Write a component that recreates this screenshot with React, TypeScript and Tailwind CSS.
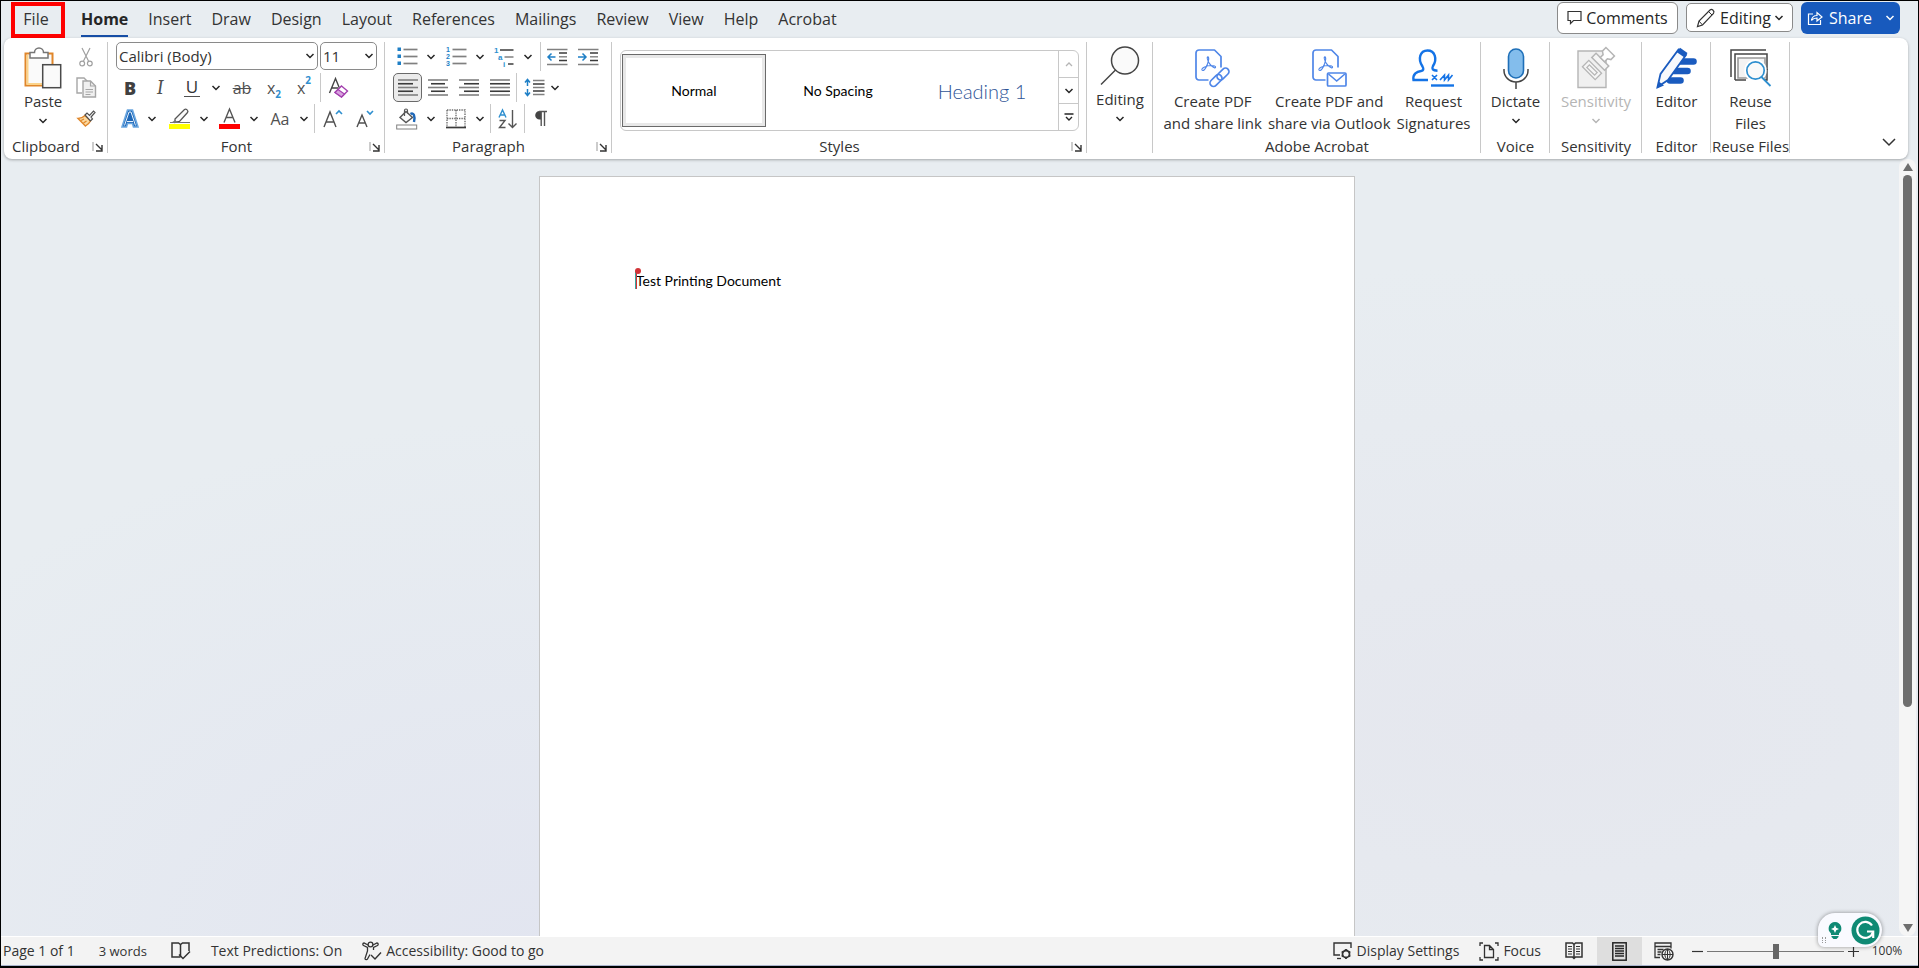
import type { ReactNode } from "react";
import clsx from "clsx";

const tabs = ["Insert", "Draw", "Design", "Layout", "References", "Mailings", "Review", "View", "Help", "Acrobat"];

/* ---------- small helpers ---------- */

function Svg({ w, h, children }: { w: number; h: number; children: ReactNode }) {
  return (
    <svg width={w} height={h} viewBox={`0 0 ${w} ${h}`} fill="none" className="shrink-0 overflow-visible" aria-hidden="true">
      {children}
    </svg>
  );
}

function Chevron({ color = "#262626" }: { color?: string }) {
  return (
    <Svg w={8} h={6}>
      <path d="M.5 1L4 4.500 7.500 1" stroke={color} strokeWidth="1.500" />
    </Svg>
  );
}

function Tool({ label, className, children }: { label: string; className?: string; children: ReactNode }) {
  return (
    <button type="button" aria-label={label} className={clsx("flex h-[29px] items-center justify-center", className ?? "w-8")}>
      {children}
    </button>
  );
}

function More({ label, className }: { label: string; className?: string }) {
  return (
    <button type="button" aria-label={label} className={clsx("flex h-[29px] w-4 items-center justify-center", className)}>
      <Chevron />
    </button>
  );
}

function Rule({ className }: { className?: string }) {
  return <span className={clsx("h-[29px] w-px bg-[#c8c8c8]", className)} />;
}

function Group({
  label,
  launcher,
  className,
  children,
}: {
  label: string;
  launcher?: boolean;
  className?: string;
  children: ReactNode;
}) {
  return (
    <section aria-label={label || "Editing"} className={clsx("relative flex shrink-0 flex-col", className)}>
      <div className="min-h-0 flex-1 pt-1">{children}</div>
      <div className={clsx("h-[25px] text-center leading-6", launcher && "pr-5")}>{label}</div>
      {launcher && (
        <button type="button" aria-label={`${label} settings`} className="absolute right-1 bottom-1.5">
          <Svg w={12} h={12}>
            <path d="M1 1v9" stroke="#999" />
            <path d="M4 3l6 6M10 4v6H4" stroke="#333" strokeWidth="1.4" />
          </Svg>
        </button>
      )}
      <span className="absolute top-1 right-0 bottom-1.5 w-px bg-[#c8c8c8]" />
    </section>
  );
}

function BigButton({
  icon,
  lines,
  more,
  disabled,
}: {
  icon: ReactNode;
  lines: string[];
  more?: boolean;
  disabled?: boolean;
}) {
  return (
    <button type="button" disabled={disabled} className={clsx("flex flex-col items-center", disabled && "text-[#b5b5b5]")}>
      <span className="flex h-11 items-center justify-center">{icon}</span>
      {lines.map((line) => (
        <span key={line} className="h-[22px] leading-[22px] whitespace-nowrap">
          {line}
        </span>
      ))}
      {more && (
        <span className="flex h-[18px] items-center">
          <Chevron color={disabled ? "#b5b5b5" : "#262626"} />
        </span>
      )}
    </button>
  );
}

/* Five ruled lines used by the alignment icons */
function Lines({ long, short }: { long: [number, number]; short: [number, number] }) {
  return (
    <Svg w={20} h={17}>
      {[long, short, long, short, long].map(([x1, x2], i) => (
        <path key={i} d={`M${x1} ${1 + i * 3.75}H${x2}`} stroke={i % 2 ? "#3b3b3b" : "#808080"} strokeWidth="1.600" />
      ))}
    </Svg>
  );
}

/* ---------- ribbon icons ---------- */

const PasteIcon = () => (
  <Svg w={38} h={42}>
    <rect x="1.5" y="6.5" width="27" height="32" fill="#fafafa" stroke="#e0862a" strokeWidth="2" />
    <path d="M3.5 8v29h24" stroke="#fbd38a" strokeWidth="2" />
    <path d="M6 5.5h4.5a4.5 4.5 0 0 1 9 0H24V11H6z" fill="#fff" stroke="#767676" strokeWidth="1.5" />
    <rect x="18.7" y="17.7" width="18" height="23" fill="#fafafa" stroke="#4a4a4a" strokeWidth="1.5" />
  </Svg>
);

const CutIcon = () => (
  <Svg w={14} h={20}>
    <path d="M3 1l6.5 13M11 1L4.5 14" stroke="#a0a0a0" strokeWidth="1.2" />
    <circle cx="3.2" cy="16.5" r="2.4" stroke="#a0a0a0" strokeWidth="1.2" />
    <circle cx="10.8" cy="16.5" r="2.4" stroke="#a0a0a0" strokeWidth="1.2" />
  </Svg>
);

const CopyIcon = () => (
  <Svg w={21} h={21}>
    <path d="M6 16H1V1h7l4 4" stroke="#a6a6a6" strokeWidth="1.4" />
    <path d="M7 4h7.5l5 5v11H7z" fill="#f0f0f0" stroke="#a6a6a6" strokeWidth="1.4" />
    <path d="M14.5 4v5h5M9.5 12.5h7.5M9.5 15h7.5M9.5 17.5h5" stroke="#a6a6a6" strokeWidth="1.2" />
  </Svg>
);

const BrushIcon = () => (
  <Svg w={19} h={17}>
    <path d="M1 8.5c3 0 5-1 7-3l5.5 5.5c-1 2-2.5 3.5-5 5z" fill="#fbd9a0" stroke="#e0862a" strokeWidth="1.4" />
    <path d="M4 10.5l3-1.5M6.5 13l3-2" stroke="#e0862a" strokeWidth="1.2" />
    <path d="M8 5l2-2 2.5 2.5L16.500 1 18 2.500l-4 4.500 1.500 2-2 2z" fill="#fafafa" stroke="#505050" strokeWidth="1.2" />
  </Svg>
);

const ClearFormatIcon = () => (
  <Svg w={22} h={22}>
    <path d="M1.500 16L7.500 1.500l4.500 11M3.500 11H10" stroke="#444" strokeWidth="1.4" />
    <path d="M13.500 9l6 5-6 6-6.500-4.500z" fill="#fff" stroke="#a33fae" strokeWidth="1.4" />
    <path d="M7 15.500l3-3 6.500 4.500-3 3z" fill="#d9a3df" stroke="#a33fae" strokeWidth="1.2" />
  </Svg>
);

const TextEffectsIcon = () => (
  <Svg w={18} h={19}>
    <path d="M6.500 1h5L17 18h-4.500l-1-3.500h-5L5.500 18H1z" fill="#1f68b8" stroke="#6ba7e0" strokeWidth="1.600" />
    <path d="M3.500 16.500L8 3h2l4.500 13.500M6 12.500h6" stroke="#e6f1fb" strokeWidth="1" />
  </Svg>
);

const HighlighterIcon = () => (
  <Svg w={22} h={22}>
    <path d="M6 11L15.5 1.5c1.500-1 4.500 1 3 3L10.500 13.500 6 14.500z" fill="#fafafa" stroke="#555" strokeWidth="1.3" />
    <path d="M2 15l4-3 3 2.500z" fill="#777" />
    <path d="M1 14.500h20" stroke="#777" strokeWidth="1" />
    <rect x="0" y="16" width="21" height="5" fill="#ffff00" />
  </Svg>
);

const FontColorIcon = () => (
  <Svg w={22} h={22}>
    <path d="M5 14.500L10.500 1l5.500 13.500M7 9.500h7" stroke="#555" strokeWidth="1.4" />
    <rect x="0" y="16" width="21" height="5" fill="#ff0000" />
  </Svg>
);

const GrowIcon = ({ down }: { down?: boolean }) => (
  <Svg w={20} h={20}>
    {down ? (
      <>
        <path d="M2 18L7 6l5 12M4 14h6" stroke="#505050" strokeWidth="1.4" />
        <path d="M12 2l3 3 3-3" stroke="#2e8fcf" strokeWidth="1.6" />
      </>
    ) : (
      <>
        <path d="M1 18L7 3l6 15M3 13h8" stroke="#505050" strokeWidth="1.4" />
        <path d="M13 5l3-3 3 3" stroke="#2e8fcf" strokeWidth="1.6" />
      </>
    )}
  </Svg>
);

const BulletsIcon = () => (
  <Svg w={21} h={19}>
    {[2, 9, 16].map((y) => (
      <g key={y}>
        <rect x="0.5" y={y - 1.5} width="3.5" height="3.5" fill="#1e7fc6" />
        <path d={`M6.500 ${y + 0.5}H20.500`} stroke="#808080" strokeWidth="1.7" />
      </g>
    ))}
  </Svg>
);

const NumberingIcon = () => (
  <Svg w={21} h={19}>
    {[2.5, 9.5, 16.5].map((y, i) => (
      <g key={y}>
        <text x="0" y={y + 2.5} fontSize="7" fontWeight="700" fill="#1e7fc6" fontFamily="Liberation Sans">
          {i + 1}
        </text>
        <path d={`M6.500 ${y}H20.500`} stroke="#808080" strokeWidth="1.7" />
      </g>
    ))}
  </Svg>
);

const MultilevelIcon = () => (
  <Svg w={20} h={20}>
    <g fontSize="8" fontWeight="700" fill="#2e8fcf" fontFamily="Liberation Sans">
      <text x="0" y="6">1</text>
      <text x="4" y="13">a</text>
      <text x="9" y="20">i</text>
    </g>
    <path d="M6 3h13.5" stroke="#3b3b3b" strokeWidth="1.500" />
    <path d="M10.500 10h9" stroke="#808080" strokeWidth="1.500" />
    <path d="M14 17h5.500" stroke="#3b3b3b" strokeWidth="1.500" />
  </Svg>
);

const IndentIcon = ({ right }: { right?: boolean }) => (
  <Svg w={21} h={18}>
    <path d="M0 1.500h20.500M0 16.500h20.500" stroke="#808080" strokeWidth="1.7" />
    <path d="M12 5h8M12 12.500h8" stroke="#3b3b3b" strokeWidth="1.4" />
    <path d="M12 8.800h8" stroke="#808080" strokeWidth="1.4" />
    <path
      d={right ? "M0 9h7.500M4.500 5.500L8 9l-3.500 3.500" : "M1 9h7.500M4.500 5.500L1 9l3.500 3.500"}
      stroke="#1e7fc6"
      strokeWidth="1.5"
    />
  </Svg>
);

const SpacingIcon = () => (
  <Svg w={21} h={19}>
    <path d="M3.500 8V1.500M1 4.500L3.500 1.500 6 4.500M3.500 11v6.500M1 14.500l2.500 3 2.500-3" stroke="#1e7fc6" strokeWidth="1.5" />
    <path d="M9 2.500h11.500M9 9.500h11.500M9 16.500h11.500" stroke="#808080" strokeWidth="1.5" />
    <path d="M9 6h11.500M9 13h11.500" stroke="#3b3b3b" strokeWidth="1.3" />
  </Svg>
);

const ShadingIcon = () => (
  <Svg w={22} h={22}>
    <path d="M10 3.500l6.500 6L10 14.500 4 9.500z" fill="#fafafa" stroke="#555" strokeWidth="1.4" />
    <path d="M8.500 8V2.500c0-2 3-2 3 0v3" stroke="#555" strokeWidth="1.2" />
    <path d="M14.500 6c3-2 5 2 3.500 8" stroke="#1f68b8" strokeWidth="2.4" />
    <rect x="0.7" y="17" width="20" height="4" fill="#fff" stroke="#808080" />
  </Svg>
);

const BordersIcon = () => (
  <Svg w={20} h={20}>
    <path d="M1 1h18v17M1 1v17M10 1v17M1 9.500h18" stroke="#707070" strokeWidth="1.4" strokeDasharray="1.4 1" />
    <path d="M0 18.500h20" stroke="#3b3b3b" strokeWidth="1.7" />
  </Svg>
);

const SortIcon = () => (
  <Svg w={19} h={20}>
    <path d="M1 8.500L4.500 1 8 8.500M2.200 6h4.600" stroke="#2e8fcf" strokeWidth="1.4" />
    <path d="M1.500 11.500h5.500l-5.500 7h6" stroke="#555" strokeWidth="1.4" />
    <path d="M14.500 1v17M10.500 14.500l4 4 4-4" stroke="#555" strokeWidth="1.4" />
  </Svg>
);

const PilcrowIcon = () => (
  <Svg w={14} h={17}>
    <path d="M7 1H5.500a4.300 4.300 0 0 0 0 8.600H7z" fill="#444" />
    <path d="M5 1.500h8M7.200 1v15M10.500 1v15" stroke="#555" strokeWidth="1.4" />
  </Svg>
);

const FindIcon = () => (
  <Svg w={40} h={40}>
    <circle cx="25" cy="14.500" r="13.500" fill="#fafafa" stroke="#444" strokeWidth="1.5" />
    <path d="M15.500 24L1 38.500" stroke="#444" strokeWidth="1.5" />
  </Svg>
);

const PdfBase = () => (
  <g stroke="#4f86e8" strokeWidth="1.7">
    <path d="M13.500 31H4a3 3 0 0 1-3-3V4a3 3 0 0 1 3-3h15.500L26 7.500v11" strokeLinejoin="round" />
    <path
      d="M12.500 8c2.500-.5.5 6-1 9.500-1.500 3-3.500 5-4.500 3.500-1-2 5-4.500 9-4.500 3 0 5 .8 4.500 2-.7 1.200-4-1-6-3.800C13 12 11.500 9 12.500 8z"
      strokeWidth="1.2"
    />
  </g>
);

const PdfLinkIcon = () => (
  <Svg w={35} h={39}>
    <PdfBase />
    <g stroke="#4f86e8" strokeWidth="1.7">
      <rect x="-3.5" y="-7" width="7" height="14" rx="3.5" transform="translate(21 31.500) rotate(45)" />
      <rect x="-3.5" y="-7" width="7" height="14" rx="3.5" transform="translate(28 25) rotate(45)" />
    </g>
  </Svg>
);

const PdfMailIcon = () => (
  <Svg w={35} h={39}>
    <PdfBase />
    <rect x="15.5" y="24" width="18.5" height="13" rx="1" fill="#fff" stroke="#4f86e8" strokeWidth="1.7" />
    <path d="M16.500 25l8.200 7 8.200-7" stroke="#4f86e8" strokeWidth="1.6" />
  </Svg>
);

const SignaturesIcon = () => (
  <Svg w={43} h={39}>
    <path
      d="M16 31H1.500c-1-6 3.500-8.500 7.500-9 2.500-.5 3-2 1.500-4.500C5.500 10 8 1.500 15.500 1.500S25.500 10 21 17c-1.500 3-.5 4.500 4.500 4.700"
      stroke="#1473e6"
      strokeWidth="2.4"
    />
    <path d="M20 26l5 5M25 26l-5 5M28 31l4.500-5v5l4-5v5l4-5" stroke="#1473e6" strokeWidth="1.6" />
    <path d="M19 36.500h23" stroke="#1473e6" strokeWidth="2.4" />
  </Svg>
);

const MicIcon = () => (
  <Svg w={26} h={41}>
    <path d="M1 21v1.500a12 11.500 0 0 0 24 0V21M13 34v7" stroke="#444" strokeWidth="1.5" />
    <rect x="5.5" y="1" width="15" height="29" rx="7.5" fill="#83bdec" stroke="#1e6fb8" strokeWidth="1.6" />
  </Svg>
);

const SensitivityIcon = () => (
  <Svg w={38} h={41}>
    <path d="M1 3h28v36.500H1z" fill="#f0f0f0" stroke="#b5b5b5" strokeWidth="1.4" />
    <g transform="translate(15 22) rotate(45)">
      <rect x="-9" y="-4.5" width="18" height="9" fill="#f5f5f5" stroke="#b5b5b5" strokeWidth="1.3" />
      <rect x="-5.5" y="-1.8" width="11" height="3.6" stroke="#b5b5b5" strokeWidth="1.2" />
    </g>
    <g transform="translate(24 13) rotate(45)">
      <path d="M-9-2H9v6H-9z" fill="#f5f5f5" stroke="#b5b5b5" strokeWidth="1.5" />
      <path d="M-3-2v-4l-3-2v-5H6v5l-3 2v4z" fill="#fff" stroke="#b5b5b5" strokeWidth="1.5" />
    </g>
  </Svg>
);

const EditorIcon = () => (
  <Svg w={42} h={42}>
    <path d="M22 14.500h15.500M18 24h13.500M14 33.500h10.500" stroke="#1a5bbf" strokeWidth="6.6" strokeLinecap="round" />
    <path d="M1.500 40l3-13L22.500 2.500l7.500 5.500-18 25z" fill="#f7f9fc" stroke="#1a5bbf" strokeWidth="1.8" />
    <path d="M20.500 5L24 .8 31.500 6l-3 4.500z" fill="#1a5bbf" />
    <path d="M1 41.500l1.800-7L8 38.500z" fill="#1a5bbf" />
  </Svg>
);

const ReuseIcon = () => (
  <Svg w={40} h={39}>
    <path d="M1 28V1h35M5 31V5h32v16" stroke="#444" strokeWidth="1.5" />
    <path d="M8 9h27v20H8z" fill="#f3f3f3" stroke="#999" strokeWidth="1.6" />
    <path d="M37 20v11h-3M5 31h11" stroke="#444" strokeWidth="1.5" />
    <circle cx="25.5" cy="21.5" r="8.7" fill="#fafafa" stroke="#fff" strokeWidth="5" />
    <circle cx="25.5" cy="21.5" r="8.7" fill="#fafafa" stroke="#2e8fcf" strokeWidth="1.7" />
    <path d="M31.500 28l9 9" stroke="#2e8fcf" strokeWidth="1.8" />
  </Svg>
);

/* ---------- title row ---------- */

function TabRow() {
  return (
    <header className="flex h-[37px] items-center text-base text-[#333]">
      <nav className="flex items-center gap-5">
        <a
          href="#file"
          className="-mr-1 ml-2.5 flex h-9 w-[54px] items-center justify-center border-4 border-[#ff0000] pr-1 pb-0.5"
        >
          File
        </a>
        <a href="#home" className="relative pb-0.5 font-bold text-[#262626]">
          Home
          <span className="absolute right-0 -bottom-1 left-0 h-0.5 bg-[#174ea6]" />
        </a>
        {tabs.map((tab) => (
          <a key={tab} href={`#${tab.toLowerCase()}`} className="pb-0.5">
            {tab}
          </a>
        ))}
      </nav>
      <div className="mr-[18px] mb-1 ml-auto flex items-center gap-2 text-[#262626]">
        <button type="button" className="flex h-8 w-[121px] items-center justify-center gap-1 rounded-md border border-[#8a8a8a] bg-white">
          <Svg w={15} h={15}>
            <path d="M1 1.500h13v9H6.500L3.500 13.500v-3H1z" stroke="#333" strokeWidth="1.2" />
          </Svg>
          Comments
        </button>
        <button type="button" className="flex h-[29px] w-[107px] items-center justify-center gap-1 rounded-[5px] border border-[#8a8a8a] bg-white">
          <Svg w={20} h={20}>
            <path d="M1.500 18.500L3 13 14 2c2-1.500 5 1 3.500 3.500L6.500 17z" stroke="#333" strokeWidth="1.2" />
            <path d="M12.500 3.500l3.500 3.500M3 13l3.500 4" stroke="#333" />
          </Svg>
          Editing
          <Chevron />
        </button>
        <button type="button" className="flex h-8 w-[99px] items-center justify-center gap-1.5 rounded-md bg-[#185abd] text-white">
          <Svg w={16} h={16}>
            <path d="M6 4H1.500v10.500h12V10" stroke="#fff" strokeWidth="1.2" />
            <path d="M4.500 10.500C5 7 7 5.500 10 5.500V2.500l5 4.500-5 4V8c-2.500 0-4 .5-5.500 2.500z" stroke="#fff" strokeWidth="1.2" />
          </Svg>
          Share
          <span className="ml-2">
            <Chevron color="#fff" />
          </span>
        </button>
      </div>
    </header>
  );
}

/* ---------- ribbon ---------- */

function SelectBox({ label, value, className }: { label: string; value: string; className: string }) {
  return (
    <label className={clsx("relative flex h-7 items-center", className)}>
      <select aria-label={label} className="h-full w-full appearance-none rounded-[5px] border border-[#8a8a8a] bg-white pl-0.5">
        <option>{value}</option>
      </select>
      <span className="pointer-events-none absolute right-1">
        <Chevron />
      </span>
    </label>
  );
}

function Ribbon() {
  return (
    <div className="relative z-10 mr-2.5 ml-[3px] flex h-[121px] rounded-lg bg-white text-[15px] text-[#333] shadow-[0_1px_3px_rgba(0,0,0,0.3)]">
      <Group label="Clipboard" launcher className="w-[104px]">
        <div className="flex pt-1 pl-5">
          <BigButton icon={<PasteIcon />} lines={["Paste"]} more />
          <div className="-mt-1 ml-2 flex flex-col gap-0.5">
            <Tool label="Cut"><CutIcon /></Tool>
            <Tool label="Copy"><CopyIcon /></Tool>
            <Tool label="Format Painter"><BrushIcon /></Tool>
          </div>
        </div>
      </Group>

      <Group label="Font" launcher className="w-[277px]">
        <div className="flex flex-col gap-0.5 pl-2">
          <div className="flex h-[29px] gap-0.5">
            <SelectBox label="Font" value="Calibri (Body)" className="w-[202px]" />
            <SelectBox label="Font Size" value="11" className="w-[57px]" />
          </div>
          <div className="flex">
            <Tool label="Bold" className="w-7 text-lg font-extrabold text-[#404040]">B</Tool>
            <Tool label="Italic" className="w-8 font-serif text-xl text-[#505050] italic">I</Tool>
            <Tool label="Underline" className="w-8">
              <span className="border-b border-[#505050] px-0.5 text-[17px] leading-[18px]">U</span>
            </Tool>
            <More label="Underline styles" />
            <Tool label="Strikethrough" className="w-9 text-base text-[#505050] line-through">ab</Tool>
            <Tool label="Subscript" className="w-7">
              <span className="text-base text-[#505050]">x</span>
              <span className="self-end text-[10px] font-bold text-[#2e8fcf]">2</span>
            </Tool>
            <Tool label="Superscript">
              <span className="text-base text-[#505050]">x</span>
              <span className="self-start text-[10px] font-bold text-[#2e8fcf]">2</span>
            </Tool>
            <Rule />
            <Tool label="Clear Formatting" className="w-9"><ClearFormatIcon /></Tool>
          </div>
          <div className="flex">
            <Tool label="Text Effects" className="w-7"><TextEffectsIcon /></Tool>
            <More label="More text effects" />
            <Tool label="Highlight" className="ml-1 w-8"><HighlighterIcon /></Tool>
            <More label="Highlight colors" />
            <Tool label="Font Color" className="ml-0.5 w-8"><FontColorIcon /></Tool>
            <More label="Font colors" />
            <Tool label="Change Case" className="ml-0.5 w-8 text-base text-[#505050]">Aa</Tool>
            <More label="More cases" />
            <Rule className="ml-0.5" />
            <Tool label="Grow Font" className="w-9"><GrowIcon /></Tool>
            <Tool label="Shrink Font" className="w-7"><GrowIcon down /></Tool>
          </div>
        </div>
      </Group>

      <Group label="Paragraph" launcher className="w-[227px]">
        <div className="flex flex-col gap-0.5 pl-1.5">
          <div className="flex">
            <Tool label="Bullets"><BulletsIcon /></Tool>
            <More label="Bullet styles" />
            <Tool label="Numbering" className="ml-px w-8"><NumberingIcon /></Tool>
            <More label="Number styles" />
            <Tool label="Multilevel List"><MultilevelIcon /></Tool>
            <More label="List styles" />
            <Rule className="ml-1" />
            <Tool label="Decrease Indent"><IndentIcon /></Tool>
            <Tool label="Increase Indent" className="w-[30px]"><IndentIcon right /></Tool>
          </div>
          <div className="flex">
            <Tool label="Align Left" className="ml-0.5 w-[29px] rounded-[5px] border border-[#6a6a6a] bg-[#ebebeb]">
              <Lines long={[0, 20]} short={[0, 15]} />
            </Tool>
            <Tool label="Center"><Lines long={[0, 20]} short={[3, 17]} /></Tool>
            <Tool label="Align Right" className="w-[30px]"><Lines long={[0, 20]} short={[5, 20]} /></Tool>
            <Tool label="Justify"><Lines long={[0, 20]} short={[0, 20]} /></Tool>
            <Rule />
            <Tool label="Line Spacing" className="w-[34px]"><SpacingIcon /></Tool>
            <More label="Spacing options" className="-ml-1" />
          </div>
          <div className="flex">
            <Tool label="Shading"><ShadingIcon /></Tool>
            <More label="Shading colors" />
            <Tool label="Borders" className="ml-px w-8"><BordersIcon /></Tool>
            <More label="Border styles" />
            <Rule className="ml-0.5" />
            <Tool label="Sort"><SortIcon /></Tool>
            <Rule className="ml-px" />
            <Tool label="Show Marks"><PilcrowIcon /></Tool>
          </div>
        </div>
      </Group>

      <Group label="Styles" launcher className="w-[475px]">
        <div className="mx-2 mt-2 flex h-[81px] justify-between rounded-md border border-[#c8c8c8] text-black">
          <div className="flex py-0.5 pl-px font-[Lato,'Open_Sans',sans-serif] text-sm">
            <button type="button" className="my-px w-36 border border-[#6a6a6a] p-[3px] shadow-[inset_0_0_0_3px_#e8e8e8]">
              Normal
            </button>
            <button type="button" className="w-36">No Spacing</button>
            <button type="button" className="w-36 text-xl font-light text-[#2f5496]">Heading 1</button>
          </div>
          <div className="flex w-5 flex-col divide-y divide-[#c8c8c8] border-l border-[#c8c8c8]">
            <button type="button" aria-label="Previous styles" className="flex flex-1 items-center justify-center">
              <Svg w={8} h={6}><path d="M1 5l3-3 3 3" stroke="#b5b5b5" strokeWidth="1.3" /></Svg>
            </button>
            <button type="button" aria-label="Next styles" className="flex flex-1 items-center justify-center"><Chevron /></button>
            <button type="button" aria-label="More styles" className="flex flex-1 items-center justify-center">
              <Svg w={10} h={9}><path d="M.5 1h9M2 4l3 3 3-3" stroke="#262626" strokeWidth="1.4" /></Svg>
            </button>
          </div>
        </div>
      </Group>

      <Group label="" className="w-[66px]">
        <div className="flex justify-center pt-0.5">
          <BigButton icon={<FindIcon />} lines={["Editing"]} more />
        </div>
      </Group>

      <Group label="Adobe Acrobat" className="w-[328px]">
        <div className="flex justify-center gap-1.5 pt-1">
          <BigButton icon={<PdfLinkIcon />} lines={["Create PDF", "and share link"]} />
          <BigButton icon={<PdfMailIcon />} lines={["Create PDF and", "share via Outlook"]} />
          <BigButton icon={<SignaturesIcon />} lines={["Request", "Signatures"]} />
        </div>
      </Group>

      <Group label="Voice" className="w-[69px]">
        <div className="flex justify-center pt-1">
          <BigButton icon={<MicIcon />} lines={["Dictate"]} more />
        </div>
      </Group>

      <Group label="Sensitivity" className="w-[92px]">
        <div className="flex justify-center pt-1">
          <BigButton icon={<SensitivityIcon />} lines={["Sensitivity"]} more disabled />
        </div>
      </Group>

      <Group label="Editor" className="w-[69px]">
        <div className="flex justify-center pt-1">
          <BigButton icon={<EditorIcon />} lines={["Editor"]} />
        </div>
      </Group>

      <Group label="Reuse Files" className="w-[79px] whitespace-nowrap">
        <div className="flex justify-center pt-1">
          <BigButton icon={<ReuseIcon />} lines={["Reuse", "Files"]} />
        </div>
      </Group>

      <button type="button" aria-label="Collapse ribbon" className="mr-3 mb-3 ml-auto self-end">
        <Svg w={14} h={9}>
          <path d="M1 1l6 6 6-6" stroke="#333" strokeWidth="1.5" />
        </Svg>
      </button>
    </div>
  );
}

/* ---------- document ---------- */

function Workspace() {
  return (
    <main className="flex min-h-0 flex-1">
      <div className="flex min-w-0 flex-1 justify-center overflow-hidden pt-[17px] pr-1.5">
        <article className="w-[816px] border border-b-0 border-[#c6c6c6] bg-white px-24 py-24 font-[Lato,'Open_Sans',sans-serif] text-sm leading-4 text-black">
          <p className="relative">
            {/* collaborator caret */}
            <span className="absolute -top-0.5 -left-px h-[18px] w-0.5 border-l border-[#3aa6a0] bg-[#d13438]" />
            <span className="absolute -top-[5px] -left-px size-1.5 rounded-full bg-[#d13438]" />
            Test Printing Document
          </p>
        </article>
      </div>
      <div className="mr-0.5 flex w-[17px] flex-col items-center rounded-lg bg-[#f5f5f5] pt-1 pb-1">
        <Svg w={10} h={8}><path d="M5 0l5 8H0z" fill="#6e6e6e" /></Svg>
        <div className="mt-1 flex w-full flex-1 justify-center">
          <span className="h-[71%] w-[9px] rounded-full bg-[#6e6e6e]" />
        </div>
        <Svg w={10} h={8}><path d="M0 0h10L5 8z" fill="#6e6e6e" /></Svg>
      </div>
    </main>
  );
}

/* ---------- status bar ---------- */

function StatusBar() {
  return (
    <footer className="relative flex h-[30px] items-center border-t border-b border-t-white border-b-[#a9b4cc] bg-[#f3f3f3] text-sm text-[#333]">
      <span className="pl-0.5">Page 1 of 1</span>
      <span className="ml-6 text-[13px]">3 words</span>
      <button type="button" aria-label="Proofing" className="ml-6">
        <Svg w={20} h={18}>
          <path d="M9.500 15H1V1h6.500l2 1.500 2-1.500H18v8M9.500 2.500V15" stroke="#333" strokeWidth="1.5" />
          <path d="M8 12.500l4 4 7-7" stroke="#333" strokeWidth="1.5" />
        </Svg>
      </button>
      <span className="ml-5">Text Predictions: On</span>
      <button type="button" className="ml-5 flex items-center gap-1">
        <Svg w={20} h={20}>
          <circle cx="8.5" cy="3.5" r="2.4" stroke="#333" strokeWidth="1.3" />
          <path
            d="M6 4L2 2C.5 2 .5 4 1.5 4.500L5.500 6.500V10L3 17.500c0 1.500 2 1.500 2.500.5L8 13.500M11 4l4-2c1.500 0 1.500 2 .5 2.500l-4 2V9"
            stroke="#333"
            strokeWidth="1.3"
          />
          <path d="M9 14l4 4 6-6.500" stroke="#333" strokeWidth="1.4" />
        </Svg>
        Accessibility: Good to go
      </button>

      <div className="ml-auto flex h-full items-center">
        <button type="button" className="flex items-center gap-1">
          <Svg w={20} h={18}>
            <path d="M18 6V1H1v12h6" stroke="#333" strokeWidth="1.4" />
            <circle cx="13" cy="12" r="3.5" stroke="#333" strokeWidth="1.8" />
            <path d="M13 7v2M13 15v2M8.700 9.500l1.500 1M15.800 13.500l1.500 1M8.700 14.500l1.500-1M15.800 10.500l1.500-1" stroke="#333" strokeWidth="1.8" />
            <path d="M4 16.500h4" stroke="#333" strokeWidth="1.3" />
          </Svg>
          Display Settings
        </button>
        <button type="button" className="ml-5 flex items-center gap-1">
          <Svg w={20} h={19}>
            <path d="M4 1H1v3M16 1h3v3M4 18H1v-3M16 18h3v-3" stroke="#333" strokeWidth="1.3" />
            <path d="M5.500 3.500h5l4 4v8h-9zM10.500 3.500v4h4" stroke="#333" strokeWidth="1.3" />
          </Svg>
          Focus
        </button>
        <button type="button" aria-label="Read Mode" className="ml-6">
          <Svg w={18} h={18}>
            <path d="M9 16V2.500L7.500 1H1v14h6.500L9 16.500l1.500-1.500H17V1h-6.500L9 2.500" stroke="#333" strokeWidth="1.5" />
            <path d="M3 4.500h4M3 7h4M3 9.500h4M3 12h4M11 4.500h4M11 7h4M11 9.500h4M11 12h4" stroke="#333" />
          </Svg>
        </button>
        <button type="button" aria-label="Print Layout" className="ml-3.5 flex h-full w-[45px] items-center justify-center bg-[#dedede]">
          <Svg w={15} h={19}>
            <rect x=".8" y=".8" width="13.4" height="17.4" stroke="#262626" strokeWidth="1.5" />
            <path d="M3 4h9M3 6.500h9M3 9h9M3 11.500h9M3 14h9" stroke="#262626" strokeWidth="1.3" />
          </Svg>
        </button>
        <button type="button" aria-label="Web Layout" className="ml-3">
          <Svg w={20} h={19}>
            <path d="M6 15.500H1V1h16v5.500M1 4.500h16M3.500 7.500h6M3.500 10h4M3.500 12.500h3" stroke="#333" strokeWidth="1.3" />
            <circle cx="13.5" cy="12.500" r="5.500" stroke="#333" strokeWidth="1.4" />
            <path d="M8 12.500h11M13.500 7v11M13.500 7c-3.500 3-3.500 8 0 11 3.500-3 3.500-8 0-11" stroke="#333" />
          </Svg>
        </button>
        <button type="button" aria-label="Zoom out" className="ml-[18px]">
          <Svg w={11} h={11}><path d="M0 5.500h11" stroke="#333" strokeWidth="1.2" /></Svg>
        </button>
        <input
          type="range"
          aria-label="Zoom"
          min={0}
          max={200}
          defaultValue={100}
          className="mx-1 h-4 w-[137px] appearance-none bg-transparent bg-[linear-gradient(#777,#777)] bg-[length:100%_1px] bg-center bg-no-repeat [&::-webkit-slider-thumb]:h-[15px] [&::-webkit-slider-thumb]:w-1.5 [&::-webkit-slider-thumb]:appearance-none [&::-webkit-slider-thumb]:bg-[#666]"
        />
        <button type="button" aria-label="Zoom in">
          <Svg w={11} h={11}><path d="M0 5.500h11M5.500 0v11" stroke="#333" strokeWidth="1.2" /></Svg>
        </button>
        <button type="button" className="mr-[15px] ml-3 w-8 text-xs">100%</button>
      </div>

      {/* Grammarly floating widget */}
      <div className="absolute right-9 bottom-[18px] flex h-[34px] w-16 items-center justify-between rounded-t-[17px] rounded-br-[17px] rounded-bl-md bg-[#f9faff] pr-0.5 pl-2 shadow-[0_0_4px_rgba(0,0,0,0.4)]">
        <button type="button" aria-label="Suggestions" className="ml-0.5">
          <Svg w={14} h={17}>
            <path d="M7 0a6.500 6.500 0 0 0-4 11.500V13h8v-1.500A6.500 6.500 0 0 0 7 0z" fill="#0f8a74" />
            <path d="M3.500 14h7v1l-2 2h-3l-2-2z" fill="#0f8a74" />
            <path d="M7 3l1.200 2.800L11 7 8.200 8.200 7 11 5.800 8.200 3 7l2.800-1.200z" fill="#fff" />
          </Svg>
        </button>
        <button type="button" aria-label="Grammarly">
          <Svg w={29} h={29}>
            <circle cx="14.5" cy="14.5" r="14" fill="#0f8a74" />
            <path d="M21 9.500A8 8 0 1 0 22 16" stroke="#fff" strokeWidth="2.2" />
            <path d="M16 15.500h6.200V22" stroke="#fff" strokeWidth="2.2" />
          </Svg>
        </button>
        <span className="absolute bottom-1 left-1 h-1.5 w-1 border-x border-dotted border-[#999]" />
      </div>
    </footer>
  );
}

export default function App() {
  return (
    <div className="flex h-screen flex-col overflow-hidden border border-b-2 border-black bg-[#e8edf1] bg-[radial-gradient(ellipse_at_28%_100%,#e2e5f0_0%,transparent_40%),radial-gradient(ellipse_at_80%_75%,#e5e7ee_0%,transparent_45%)] font-['Open_Sans','Noto_Sans',sans-serif]">
      <TabRow />
      <Ribbon />
      <Workspace />
      <StatusBar />
    </div>
  );
}
